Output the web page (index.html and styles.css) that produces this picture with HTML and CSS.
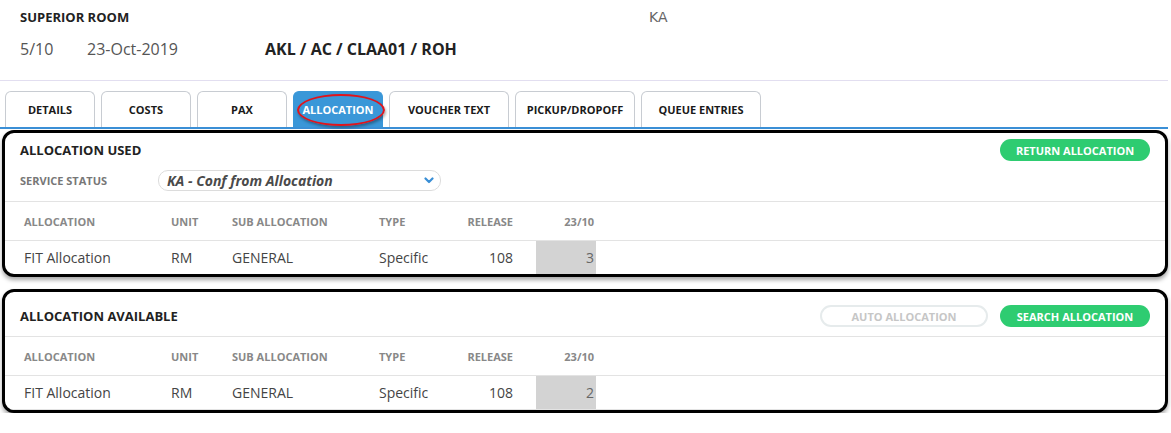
FILE: index.html
```html
<!DOCTYPE html>
<html>
<head>
<meta charset="utf-8">
<link rel="stylesheet" href="styles.css">
</head>
<body>
<div class="page">
  <header class="header">
    <div class="row-top">
      <div class="room">SUPERIOR ROOM</div>
      <div class="status-code">KA</div>
    </div>
    <div class="row-info">
      <span class="seq">5/10</span>
      <span class="date">23-Oct-2019</span>
      <span class="route">AKL / AC / CLAA01 / ROH</span>
    </div>
  </header>

  <nav class="tabs">
    <div class="tab">DETAILS</div>
    <div class="tab">COSTS</div>
    <div class="tab">PAX</div>
    <div class="tab active">ALLOCATION<span class="ring"></span></div>
    <div class="tab wide">VOUCHER TEXT</div>
    <div class="tab wide">PICKUP/DROPOFF</div>
    <div class="tab wide">QUEUE ENTRIES</div>
  </nav>

  <section class="panel panel-used">
    <div class="panel-head">
      <div class="head-row">
        <h2 class="panel-title">ALLOCATION USED</h2>
        <div class="actions">
          <button class="btn btn-green">RETURN ALLOCATION</button>
        </div>
      </div>
      <div class="status-row">
        <span class="status-label">SERVICE STATUS</span>
        <div class="select">
          <span class="select-text">KA - Conf from Allocation</span>
          <svg class="chev" width="10" height="7" viewBox="0 0 10 7"><path d="M1.5 1.5 L5 5 L8.5 1.5" fill="none" stroke="#3a8fd6" stroke-width="2.2" stroke-linecap="round" stroke-linejoin="round"/></svg>
        </div>
      </div>
    </div>
    <div class="grid head">
      <div class="c c1">ALLOCATION</div>
      <div class="c">UNIT</div>
      <div class="c">SUB ALLOCATION</div>
      <div class="c">TYPE</div>
      <div class="c num c5">RELEASE</div>
      <div class="c num c6">23/10</div>
      <div class="c"></div>
    </div>
    <div class="grid data">
      <div class="c c1">FIT Allocation</div>
      <div class="c">RM</div>
      <div class="c">GENERAL</div>
      <div class="c">Specific</div>
      <div class="c num c5">108</div>
      <div class="c num c6 qty">3</div>
      <div class="c"></div>
    </div>
  </section>

  <section class="panel panel-avail">
    <div class="panel-head avail-head">
      <div class="head-row">
        <h2 class="panel-title">ALLOCATION AVAILABLE</h2>
        <div class="actions">
          <button class="btn btn-outline">AUTO ALLOCATION</button>
          <button class="btn btn-green">SEARCH ALLOCATION</button>
        </div>
      </div>
    </div>
    <div class="grid head">
      <div class="c c1">ALLOCATION</div>
      <div class="c">UNIT</div>
      <div class="c">SUB ALLOCATION</div>
      <div class="c">TYPE</div>
      <div class="c num c5">RELEASE</div>
      <div class="c num c6">23/10</div>
      <div class="c"></div>
    </div>
    <div class="grid data last">
      <div class="c c1">FIT Allocation</div>
      <div class="c">RM</div>
      <div class="c">GENERAL</div>
      <div class="c">Specific</div>
      <div class="c num c5">108</div>
      <div class="c num c6 qty">2</div>
      <div class="c"></div>
    </div>
  </section>
</div>
</body>
</html>
```

FILE: styles.css
```css
* { box-sizing: border-box; }
html, body { margin: 0; padding: 0; background: #fff; }
body {
  font-family: "Open Sans", "Noto Sans", sans-serif;
  color: #333;
}
.page { width: 1168px; }

.header {
  height: 81px;
  padding: 9px 20px 0;
  border-bottom: 1px solid #e2def0;
}
.row-top { display: flex; height: 16px; align-items: center; }
.room {
  width: 629px;
  font-size: 13px;
  font-weight: 700;
  color: #222;
  line-height: 16px;
}
.status-code {
  font-family: "DejaVu Sans", sans-serif;
  font-size: 14px;
  color: #666;
  line-height: 16px;
}
.row-info {
  display: flex;
  margin-top: 13px;
  height: 22px;
  align-items: center;
  font-size: 16px;
  line-height: 22px;
}
.seq { width: 67px; color: #555; }
.date { width: 178px; color: #555; }
.route { font-weight: 700; color: #222; }

.tabs {
  display: flex;
  gap: 6px;
  padding: 10px 0 0 5px;
  border-bottom: 2px solid #3a8fd6;
}
.tab {
  position: relative;
  width: 90px;
  height: 36px;
  border: 1px solid #c8ccd2;
  border-bottom: none;
  border-radius: 6px 6px 0 0;
  display: flex;
  align-items: center;
  justify-content: center;
  font-size: 11px;
  font-weight: 700;
  color: #1a1a1a;
  background: #fff;
}
.tab.wide { width: 120px; }
.tab.active {
  background: #3a97d8;
  border-color: #3a97d8;
  color: #fff;
}
.ring {
  position: absolute;
  left: 3px;
  top: 2px;
  width: 88px;
  height: 32px;
  border: 2.5px solid #e0141b;
  border-radius: 50%;
  box-shadow: 1px 2px 3px rgba(0,0,0,0.35);
}

.panel {
  margin: 1px 0 0 2px;
  width: 1166px;
  border: 3px solid #000;
  border-radius: 12px;
  box-shadow: 0 3px 4px rgba(0,0,0,0.35);
  overflow: hidden;
  background: #fff;
}
.panel-avail { margin-top: 12px; }

.panel-head {
  padding: 6px 15px 10px;
  border-bottom: 1px solid #e3e3e3;
}
.avail-head { padding: 13px 15px 9px; }
.head-row {
  display: flex;
  align-items: center;
  justify-content: space-between;
  height: 22px;
}
.panel-title {
  margin: 0;
  font-size: 13px;
  font-weight: 700;
  color: #222;
}
.actions { display: flex; gap: 12px; }
.btn {
  height: 22px;
  border-radius: 11px;
  font-family: "Open Sans", "Noto Sans", sans-serif;
  font-size: 11px;
  font-weight: 700;
  padding: 0;
  display: flex;
  align-items: center;
  justify-content: center;
}
.btn-green {
  width: 150px;
  background: #2ecc71;
  border: none;
  color: #fff;
}
.btn-outline {
  width: 168px;
  background: #fff;
  border: 2px solid #e6ebec;
  color: #c6c6c6;
}

.status-row {
  display: flex;
  align-items: center;
  margin-top: 9px;
  height: 21px;
}
.status-label {
  width: 138px;
  font-size: 11px;
  font-weight: 700;
  color: #777;
}
.select {
  width: 283px;
  height: 21px;
  border: 1px solid #dcdcdc;
  border-radius: 10px;
  display: flex;
  align-items: center;
  justify-content: space-between;
  padding: 0 6px 0 8px;
}
.select-text {
  font-size: 14px;
  font-weight: 700;
  font-style: italic;
  color: #4a4a4a;
}
.chev { display: block; }

.grid {
  display: grid;
  grid-template-columns: 162px 61px 147px 85px 76px 60px 1fr;
  border-bottom: 1px solid #e3e3e3;
}
.grid.head { height: 39px; }
.grid.data { height: 33px; border-bottom: none; }
.grid.data.last { height: 34px; border-bottom: 1px solid #e3e3e3; }
.c {
  display: flex;
  align-items: center;
  padding-left: 4px;
}
.c1 { padding-left: 19px; }
.num { justify-content: flex-end; padding-left: 0; }
.c5 { padding-right: 23px; }
.c6 { padding-right: 2px; }
.head .c {
  font-size: 11px;
  font-weight: 700;
  color: #888;
}
.data .c {
  font-size: 14px;
  color: #444;
}
.data .qty { background: #d3d3d3; color: #666; }
```
